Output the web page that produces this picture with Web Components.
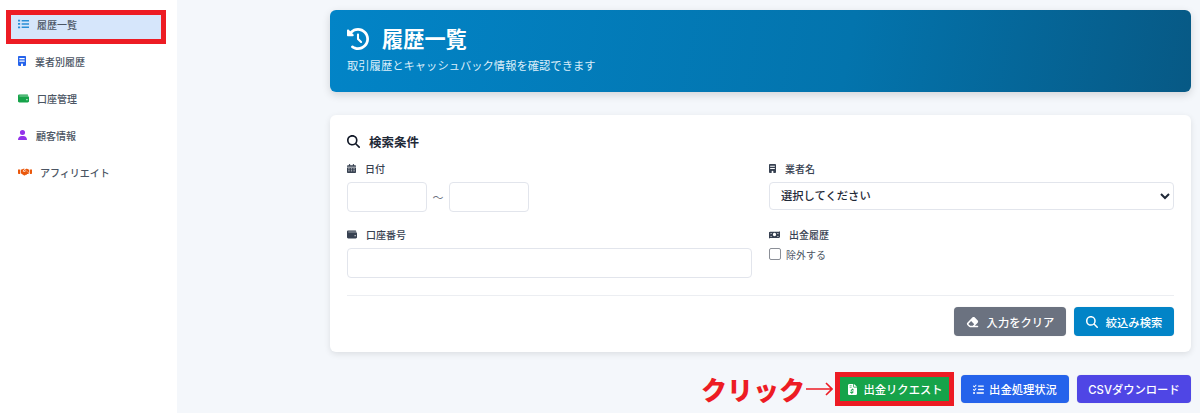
<!DOCTYPE html>
<html lang="ja">
<head>
<meta charset="utf-8">
<title>履歴一覧</title>
<style>
  html, body { margin: 0; padding: 0; height: 413px; overflow: hidden; background: #f4f7fb; }
  body { font-family: Inter, "Noto Sans CJK JP", sans-serif; }
</style>
</head>
<body>
<history-page></history-page>

<script>
// icons are kept in one place
const ICONS = {
  list: { box: '0 0 512 512', d: 'M0 40h100v90H0zM0 210h100v90H0zM0 380h100v90H0zM170 45h342v80H170zM170 215h342v80H170zM170 385h342v80H170z' },
  building: { box: '0 0 384 512', d: 'M48 0C21 0 0 21 0 48v416c0 27 21 48 48 48h96v-80c0-26 22-48 48-48s48 22 48 48v80h96c27 0 48-21 48-48V48c0-27-21-48-48-48H48zm16 96h256v64H64V96zm0 128h256v64H64v-64z' },
  wallet: { box: '0 0 512 512', d: 'M64 32C29 32 0 61 0 96v320c0 35 29 64 64 64h384c35 0 64-29 64-64V192c0-35-29-64-64-64H80c-9 0-16-7-16-16s7-16 16-16h368c18 0 32-14 32-14s-14-50-32-50H64zm352 256a32 32 0 1 1 0 64 32 32 0 0 1 0-64z' },
  user: { box: '0 0 448 512', d: 'M224 256a128 128 0 1 0 0-256 128 128 0 0 0 0 256zm-46 48C80 304 0 384 0 482c0 16 13 30 30 30h388c17 0 30-14 30-30 0-98-80-178-178-178h-92z' },
  handshake: { box: '0 0 640 512', d: 'M0 128h96v224H32c-18 0-32-14-32-32V128zm544 0h96v192c0 18-14 32-32 32h-64V128zM128 136l96-40c30-12 62-8 88 8l-72 64c-22 20-24 54-4 76s56 24 78 4l58-52 130 120-26 30c-16 18-44 22-64 8l-8 26c-10 22-38 32-60 22l-14 14c-18 18-46 20-66 4L128 320V136zm384 0v170l-152-140-28 24-50 46c-10 8-26 8-36-2s-8-26 2-34l96-86c26-22 62-26 92-12l76 34z' },
  history: { box: '0 0 512 512', d: 'M75 75L41 41C26 26 0 37 0 58v110c0 13 11 24 24 24h110c21 0 32-26 17-41l-31-31c36-36 85-56 136-56 106 0 192 86 192 192s-86 192-192 192c-41 0-79-13-110-35-14-10-34-7-45 7s-7 34 7 45c42 30 93 47 148 47 141 0 256-115 256-256S397 0 256 0C185 0 122 29 75 75zm181 53c-13 0-24 11-24 24v104c0 6 3 12 7 17l72 72c9 9 25 9 34 0s9-25 0-34l-65-65v-94c0-13-11-24-24-24z' },
  search: { box: '0 0 512 512', d: 'M416 208c0 46-15 88-40 123l127 126c12 13 12 33 0 46s-33 12-46 0L331 376c-35 25-77 40-123 40C93 416 0 323 0 208S93 0 208 0s208 93 208 208zM208 352a144 144 0 1 0 0-288 144 144 0 0 0 0 288z' },
  calendar: { box: '0 0 448 512', d: 'M128 0c18 0 32 14 32 32v32h128V32c0-18 14-32 32-32s32 14 32 32v32h48c27 0 48 21 48 48v48H0v-48c0-27 21-48 48-48h48V32c0-18 14-32 32-32zM0 192h448v272c0 27-21 48-48 48H48c-27 0-48-21-48-48V192zm64 64v48h64v-48H64zm128 0v48h64v-48h-64zm128 0v48h64v-48h-64zM64 368v48h64v-48H64zm128 0v48h64v-48h-64zm128 0v48h64v-48h-64z' },
  money: { box: '0 0 640 512', d: 'M64 96h512l64-32v352l-64 32H64L0 480V128l64-32zm256 64a96 96 0 1 0 0 192 96 96 0 0 0 0-192zM96 176v64c35 0 64-29 64-64H96zm448 160c-35 0-64 29-64 64h64v-64zM96 336v64h64c0-35-29-64-64-64zm448-160h-64c0 35 29 64 64 64v-64z' },
  eraser: { box: '0 0 576 512', d: 'M290.7 57.4L57.4 290.7c-25 25-25 65.5 0 90.5l80 80c12 12 28.3 18.7 45.3 18.7H512c17.7 0 32-14.3 32-32s-14.3-32-32-32H387.9L518.6 285.3c25-25 25-65.5 0-90.5L381.3 57.4c-25-25-65.5-25-90.6 0zM297.4 416H288l-105.4 0-80-80L227.3 211.3 364.7 348.7 297.4 416z' },
  tasks: { box: '0 0 512 512', d: 'M152 39c10 9 11 24 2 34l-72 80c-4 5-11 8-17 8s-13-2-18-7L7 114c-9-10-9-25 0-34s25-9 34 0l22 22 55-61c9-10 24-11 34-2zm0 160c10 9 11 24 2 34l-72 80c-4 5-11 8-17 8s-13-2-18-7L7 274c-9-10-9-25 0-34s25-9 34 0l22 22 55-61c9-10 24-11 34-2zM224 96c0-18 14-32 32-32h224a32 32 0 0 1 0 64H256c-18 0-32-14-32-32zm0 160c0-18 14-32 32-32h224a32 32 0 0 1 0 64H256c-18 0-32-14-32-32zm-64 160c0-18 14-32 32-32h288a32 32 0 0 1 0 64H192c-18 0-32-14-32-32zM48 368a48 48 0 1 1 0 96 48 48 0 0 1 0-96z' },
  invoice: { box: '0 0 384 512', d: 'M64 0C29 0 0 29 0 64v384c0 35 29 64 64 64h256c35 0 64-29 64-64V160H256c-18 0-32-14-32-32V0H64zm192 0v128h128L256 0zM64 80c0-9 7-16 16-16h64c9 0 16 7 16 16s-7 16-16 16H80c-9 0-16-7-16-16zm0 64c0-9 7-16 16-16h64c9 0 16 7 16 16s-7 16-16 16H80c-9 0-16-7-16-16zm144 88v17c9 1 17 3 25 5 13 3 21 16 18 29s-16 21-29 18c-15-4-30-7-42-6-10 1-18 2-23 5-4 2-5 4-6 6-1 2-1 3 2 5 5 3 13 6 25 9 10 3 23 7 34 13 12 8 23 20 24 38 1 19-8 33-22 42-8 5-17 8-26 10v16c0 13-11 24-24 24s-24-11-24-24v-18c-13-3-26-7-36-11-12-5-19-19-14-31s19-19 31-14c22 9 41 14 55 14 11 0 19-2 23-5 3-2 4-3 3-7 0-2-1-3-4-5-5-4-13-7-25-10-10-3-22-7-32-12-12-7-24-19-25-37 0-20 11-34 25-42 8-4 17-7 26-9v-15c0-13 11-24 24-24s24 11 24 24z' }
};

class UiIcon extends HTMLElement {
  connectedCallback() {
    if (this.shadowRoot) return;
    const i = ICONS[this.getAttribute('name')];
    this.attachShadow({ mode: 'open' }).innerHTML = `
      <style>
        :host { display: inline-flex; align-items: center; justify-content: center; flex: none; }
        svg { display: block; height: 100%; width: 100%; }
      </style>
      <svg viewBox="${i.box}" preserveAspectRatio="none" aria-hidden="true"><path fill="currentColor" d="${i.d}"/></svg>`;
  }
}
customElements.define('ui-icon', UiIcon);

const navTemplate = document.createElement('template');
navTemplate.innerHTML = `
  <style>
    :host { display: block; }
    .row {
      height: 30px;
      padding-bottom: 2px;
      margin-left: 11px;
      width: 150px;
      display: flex;
      align-items: center;
      font-size: 10px;
      font-weight: 500;
      color: #4b5563;
      box-sizing: border-box;
    }
    :host([active]) .row { background: #d6e6fb; }
    .ic { display: flex; align-items: center; justify-content: center; margin-left: 7px; height: 12px; }
  </style>
  <div class="row">
    <span class="ic"><slot name="icon"></slot></span>
    <slot></slot>
  </div>`;

class NavItem extends HTMLElement {
  constructor() {
    super();
    this.attachShadow({ mode: 'open' }).appendChild(navTemplate.content.cloneNode(true));
  }
}
customElements.define('nav-item', NavItem);

const sideTemplate = document.createElement('template');
sideTemplate.innerHTML = `
  <style>
    :host {
      display: flex;
      flex-direction: column;
      gap: 7px;
      width: 177px;
      height: 413px;
      flex: none;
      box-sizing: border-box;
      padding-top: 10px;
      background: #fff;
    }
  </style>
  <slot></slot>`;

class SideBar extends HTMLElement {
  constructor() {
    super();
    this.attachShadow({ mode: 'open' }).appendChild(sideTemplate.content.cloneNode(true));
  }
}
customElements.define('side-bar', SideBar);

const headTemplate = document.createElement('template');
headTemplate.innerHTML = `
  <style>
    :host {
      display: block;
      height: 82px;
      box-sizing: border-box;
      padding: 15px 17px 0 17px;
      border-radius: 6px;
      background: linear-gradient(100deg, #0284c7 0%, #0374ad 60%, #075985 100%);
      box-shadow: 0 3px 8px rgba(0,0,0,.14);
      color: #fff;
    }
    h1 { margin: 0; display: flex; align-items: center; font-size: 21.2px; line-height: 28px; font-weight: 700; }
    ui-icon { width: 22px; height: 22px; margin-right: 13px; }
    p { margin: 5px 0 0; font-size: 11.3px; line-height: 16px; color: #dbeefa; }
  </style>
  <h1><ui-icon name="history"></ui-icon><slot name="title"></slot></h1>
  <p><slot name="sub"></slot></p>`;

class PageHeader extends HTMLElement {
  constructor() {
    super();
    this.attachShadow({ mode: 'open' }).appendChild(headTemplate.content.cloneNode(true));
  }
}
customElements.define('page-header', PageHeader);

class FieldLabel extends HTMLElement {
  connectedCallback() {
    if (this.shadowRoot) return;
    this.attachShadow({ mode: 'open' }).innerHTML = `
      <style>
        :host { display: flex; align-items: center; height: 14px; font-size: 10px; font-weight: 500; color: #374151; }
        ui-icon { height: ${this.getAttribute('icon-h') || 9}px; margin-right: 9px; width: ${this.getAttribute('icon-w') || 9}px; }
      </style>
      <ui-icon name="${this.getAttribute('icon')}"></ui-icon><slot></slot>`;
  }
}
customElements.define('field-label', FieldLabel);

class ActionButton extends HTMLElement {
  connectedCallback() {
    if (this.shadowRoot) return;
    const name = this.getAttribute('icon');
    this.attachShadow({ mode: 'open' }).innerHTML = `
      <style>
        :host { display: inline-flex; }
        button {
          all: unset;
          box-sizing: border-box;
          display: flex;
          align-items: center;
          justify-content: center;
          width: var(--w, auto);
          height: var(--h, 28px);
          border-radius: 4px;
          background: var(--bg, #2563eb);
          color: #fff;
          font: 500 11.3px Inter, "Noto Sans CJK JP", sans-serif;
          gap: var(--gap, 5px);
          white-space: nowrap;
          box-shadow: 0 0 1px rgba(0,0,0,.2);
        }
        ui-icon { height: var(--ih, 11px); width: var(--iw, 11px); }
      </style>
      <button type="button">${name ? `<ui-icon name="${name}"></ui-icon>` : ''}<slot></slot></button>`;
  }
}
customElements.define('action-button', ActionButton);

const cardTemplate = document.createElement('template');
cardTemplate.innerHTML = `
  <style>
    :host {
      display: block;
      height: 237px;
      box-sizing: border-box;
      padding: 17px 17px 0;
      border-radius: 6px;
      background: #fff;
      box-shadow: 0 2px 6px rgba(0,0,0,.10);
      font-family: Inter, "Noto Sans CJK JP", sans-serif;
    }
    h2 { margin: 0; height: 18px; display: flex; align-items: center; font-size: 12.5px; font-weight: 700; color: #1f2937; }
    h2 ui-icon { width: 13px; height: 13px; margin-right: 9px; color: #111827; }
    .grid { display: grid; grid-template-columns: 405px 405px; grid-auto-rows: 66px; column-gap: 17px; margin-top: 11px; }
    .f { display: flex; flex-direction: column; }
    .dates { display: flex; align-items: center; margin-top: 7px; }
    input[type=text] {
      box-sizing: border-box; height: 30px; border: 1px solid #e2e5ec; border-radius: 4px;
      background: #fff; outline: none; padding: 0 8px; font: 11px Inter, sans-serif;
    }
    .dates input { width: 80px; }
    .tilde { width: 22px; text-align: center; font-size: 11px; color: #6b7280; }
    .wide { width: 405px; margin-top: 7px; }
    select {
      box-sizing: border-box; width: 405px; height: 28px; margin-top: 7px;
      border: 1px solid #e2e5ec; border-radius: 4px; background: #fff; padding: 0 7px;
      font: 500 11.3px Inter, "Noto Sans CJK JP", sans-serif; color: #1f2937; outline: none;
    }
    .check { display: flex; align-items: center; margin-top: 6px; font-size: 10px; color: #4b5563; height: 14px; }
    .check input { appearance: none; width: 12px; height: 12px; margin: 0 5px 0 0; border: 1px solid #8b8f97; border-radius: 2px; background: #fff; }
    hr { border: 0; border-top: 1px solid #eceef2; margin: 2px 0 0; }
    .acts { display: flex; justify-content: flex-end; gap: 8px; margin-top: 11px; }
  </style>
  <h2><ui-icon name="search"></ui-icon>検索条件</h2>
  <div class="grid">
    <div class="f">
      <field-label icon="calendar" icon-w="9">日付</field-label>
      <div class="dates"><input type="text"><span class="tilde">～</span><input type="text"></div>
    </div>
    <div class="f">
      <field-label icon="building" icon-w="7" icon-h="9">業者名</field-label>
      <select><option>選択してください</option></select>
    </div>
    <div class="f">
      <field-label icon="wallet" icon-w="10" icon-h="9">口座番号</field-label>
      <input class="wide" type="text">
    </div>
    <div class="f">
      <field-label icon="money" icon-w="11" icon-h="9">出金履歴</field-label>
      <label class="check"><input type="checkbox">除外する</label>
    </div>
  </div>
  <hr>
  <div class="acts">
    <action-button icon="eraser" style="--w:112px;--h:29px;--bg:#6b7280;--gap:8px;--iw:13px;--ih:12px">入力をクリア</action-button>
    <action-button icon="search" style="--w:100px;--h:29px;--bg:#0284c7;--gap:8px;--iw:12px;--ih:12px">絞込み検索</action-button>
  </div>`;

class SearchCard extends HTMLElement {
  constructor() {
    super();
    this.attachShadow({ mode: 'open' }).appendChild(cardTemplate.content.cloneNode(true));
  }
}
customElements.define('search-card', SearchCard);

const pageTemplate = document.createElement('template');
pageTemplate.innerHTML = `
  <style>
    :host { display: flex; width: 1200px; height: 413px; position: relative; }
    main {
      flex: 1;
      box-sizing: border-box;
      padding: 10px 9px 0 153px;
      display: flex;
      flex-direction: column;
      gap: 23px;
    }
    .tools { display: flex; justify-content: flex-end; align-items: center; gap: 8px; }
    .click { display: flex; align-items: center; color: #ed1c24; font: 900 26px "Noto Sans CJK JP", sans-serif; margin-right: -3px; line-height: 28px; }
    .click svg { width: 27px; height: 14px; margin-left: 1px; }
    .mark { position: absolute; box-sizing: border-box; border: 5px solid #ed1c24; pointer-events: none; }
    .m1 { left: 6px; top: 10px; width: 160px; height: 34px; }
    .m2 { left: 835px; top: 372px; width: 119px; height: 34px; }
  </style>
  <side-bar>
    <nav-item active><ui-icon slot="icon" name="list" style="width:11px;height:10px;margin-right:8px;color:#2a8fd6"></ui-icon>履歴一覧</nav-item>
    <nav-item><ui-icon slot="icon" name="building" style="width:8px;height:10px;margin-right:9px;color:#2563eb"></ui-icon>業者別履歴</nav-item>
    <nav-item><ui-icon slot="icon" name="wallet" style="width:11px;height:9px;margin-right:8px;color:#16a34a"></ui-icon>口座管理</nav-item>
    <nav-item><ui-icon slot="icon" name="user" style="width:9px;height:10px;margin-right:9px;color:#9333ea"></ui-icon>顧客情報</nav-item>
    <nav-item><ui-icon slot="icon" name="handshake" style="width:14px;height:10px;margin-right:8px;color:#ea580c"></ui-icon>アフィリエイト</nav-item>
  </side-bar>
  <main>
    <page-header>
      <span slot="title">履歴一覧</span>
      <span slot="sub">取引履歴とキャッシュバック情報を確認できます</span>
    </page-header>
    <search-card></search-card>
    <div class="tools">
      <span class="click">クリック<svg viewBox="0 0 27 14" aria-hidden="true"><path d="M0 7h26M20 1l6 6-6 6" fill="none" stroke="#ed1c24" stroke-width="1.6"/></svg></span>
      <action-button icon="invoice" style="--w:115px;--bg:#16a34a;--iw:9px;--ih:11px;--gap:6px;">出金リクエスト</action-button>
      <action-button icon="tasks" style="--w:108px;--bg:#2563eb">出金処理状況</action-button>
      <action-button style="--w:114px;--bg:#4f46e5">CSVダウンロード</action-button>
    </div>
  </main>
  <div class="mark m1"></div>
  <div class="mark m2"></div>`;

class HistoryPage extends HTMLElement {
  constructor() {
    super();
    this.attachShadow({ mode: 'open' }).appendChild(pageTemplate.content.cloneNode(true));
  }
}
customElements.define('history-page', HistoryPage);
</script>
</body>
</html>
